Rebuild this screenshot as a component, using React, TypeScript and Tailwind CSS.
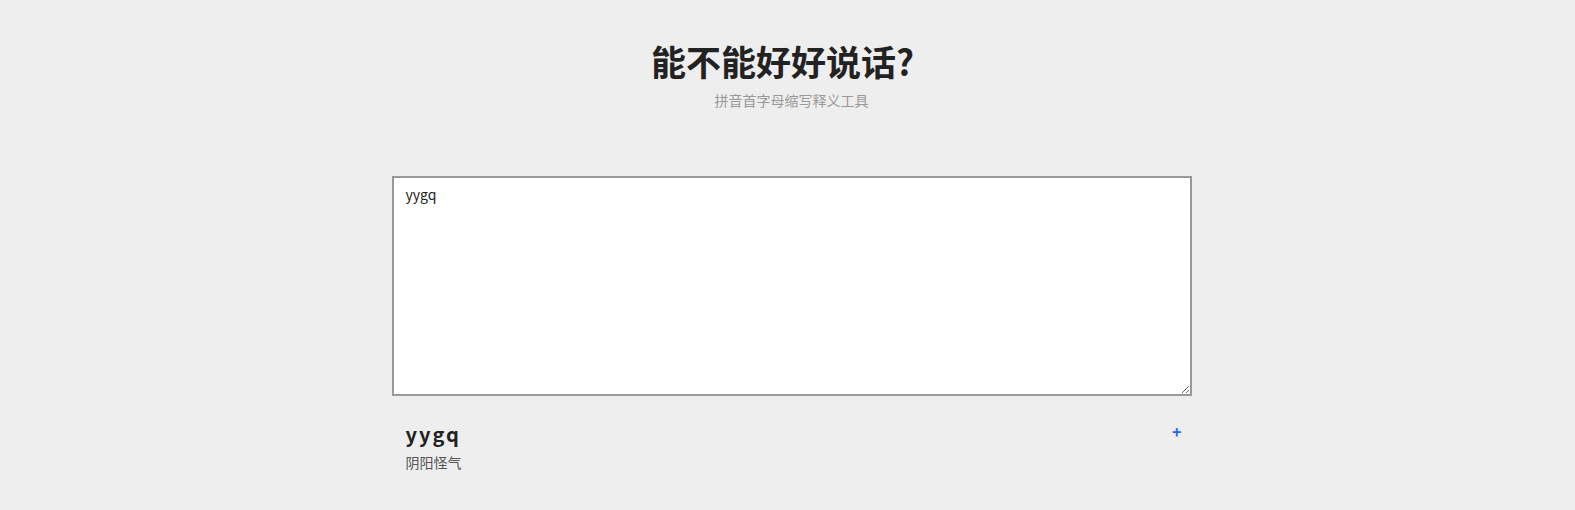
import React, { useState } from "react";

const cjk = "font-['Microsoft_YaHei','Noto_Sans_CJK_SC',sans-serif]";

export default function App() {
  const [text, setText] = useState("yygq");

  return (
    <div className={`min-h-screen bg-[#eeeeee] ${cjk}`}>
      <div className="pt-[36px]">
        <h1 className="pr-[10px] text-center text-[35px] font-bold leading-[50px] text-[#222]">能不能好好说话?</h1>
        <p className="mt-[4px] pl-[8px] text-center text-[14px] leading-[20px] text-[#999]">拼音首字母缩写释义工具</p>
      </div>
      <div className="mx-auto w-[800px] translate-x-[4px]">
        <textarea
          value={text}
          onChange={(e) => setText(e.target.value)}
          className="mt-[66px] block h-[220px] w-[800px] resize border-2 border-[#999] bg-white px-[12px] py-[6px] text-[14px] leading-[20px] text-[#222] outline-none"
        />
        <div className="mt-[24px] flex items-start justify-between pl-[14px] pr-[10px]">
          <div>
            <div className="text-[20px] font-bold leading-[28px] tracking-[2px] text-[#222]">yygq</div>
            <div className="mt-[4px] text-[14px] leading-[20px] text-[#555]">阴阳怪气</div>
          </div>
          <button className="mt-[1px] text-[16px] font-bold leading-[20px] text-[#2962ff]">+</button>
        </div>
      </div>
    </div>
  );
}
